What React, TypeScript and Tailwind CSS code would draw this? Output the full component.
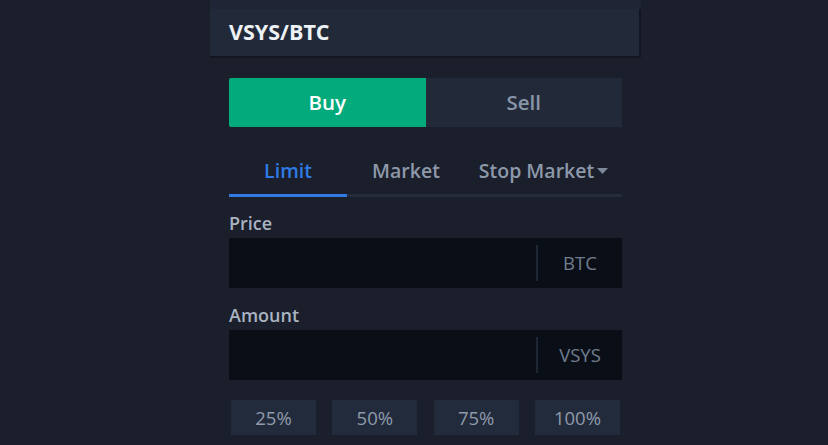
const font = { fontFamily: '"Open Sans", "Noto Sans", sans-serif' };

function Field({ label, unit }: { label: string; unit: string }) {
  return (
    <div className="flex flex-col">
      <div className="h-[27px] text-[18px] leading-[24px] font-semibold text-[#a9b3c1]">{label}</div>
      <div className="flex h-[50px] items-center bg-[#0a0f17]">
        <div className="flex-1" />
        <div className="h-[36px] w-[2px] bg-[#1e2533]" />
        <div className="w-[84px] text-center text-[18.5px] text-[#717d8f]">{unit}</div>
      </div>
    </div>
  );
}

export default function App() {
  return (
    <div className="h-[445px] w-[828px] overflow-hidden bg-[#1a1f2b]" style={font}>
      <div className="ml-[210px] w-[431px]">
        <div className="h-[9px] bg-[#1f2535]" />
        <div className="flex h-[49px] items-center border-r-2 border-b-2 border-[#111620] bg-[#222a3a] pl-[19px] text-[21.5px] font-bold text-[#eef2f7]">
          VSYS/BTC
        </div>

        <div className="px-[19px] pt-[20px]">
          <div className="flex h-[49px]">
            <div className="flex flex-1 items-center justify-center rounded-l-[2px] bg-[#03ab7c] text-[20.5px] font-semibold text-white">
              Buy
            </div>
            <div className="flex flex-1 items-center justify-center bg-[#222a3a] text-[20.5px] font-semibold text-[#8996a8]">
              Sell
            </div>
          </div>

          <div className="mt-[28px] flex h-[39px] items-center pb-[8px] text-[19.5px] font-semibold text-[#8d99aa]">
            <div className="w-[118px] text-center text-[#2f7ae5]">Limit</div>
            <div className="w-[118px] text-center">Market</div>
            <div className="flex flex-1 items-center justify-center gap-[3px]">
              Stop Market
              <svg width="11" height="6" viewBox="0 0 11 6" className="mt-[1px]">
                <path d="M0 0h11L5.5 6z" fill="#7d899b" />
              </svg>
            </div>
          </div>
          <div className="flex h-[3px] bg-[#242c3b]">
            <div className="w-[118px] bg-[#2f7ae5]" />
          </div>

          <div className="mt-[14px]">
            <Field label="Price" unit="BTC" />
          </div>
          <div className="mt-[15px]">
            <Field label="Amount" unit="VSYS" />
          </div>

          <div className="mt-[20px] flex justify-between px-[2px]">
            {['25%', '50%', '75%', '100%'].map((p) => (
              <div
                key={p}
                className="flex h-[35px] w-[85px] items-center justify-center bg-[#222b3b] text-[18.5px] text-[#8f9aab]"
              >
                {p}
              </div>
            ))}
          </div>
        </div>
      </div>
    </div>
  );
}
